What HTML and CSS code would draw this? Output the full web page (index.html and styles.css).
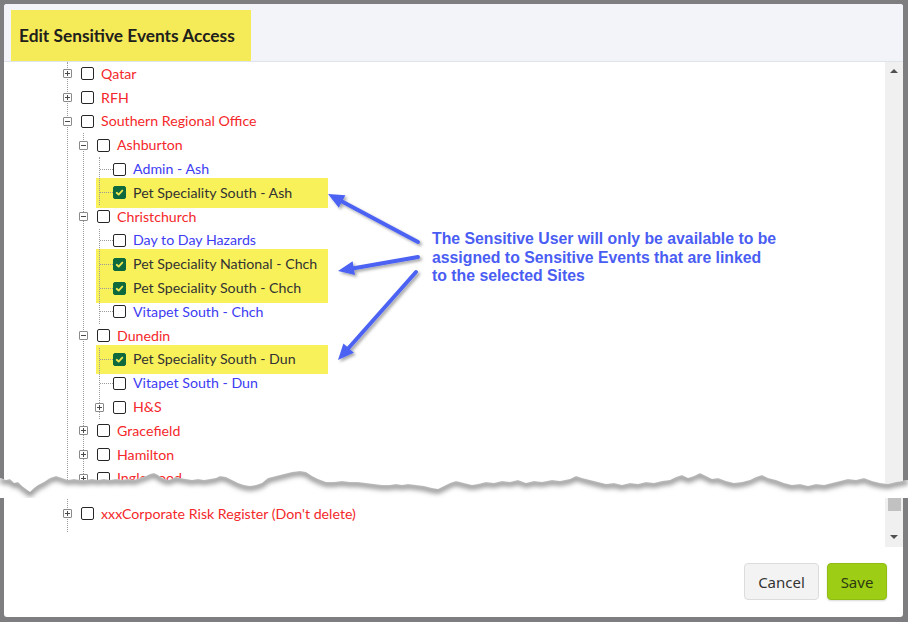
FILE: index.html
```html
<!DOCTYPE html>
<html lang="en">
<head>
<meta charset="utf-8">
<title>Edit Sensitive Events Access</title>
<link rel="stylesheet" href="styles.css">
</head>
<body>
<div class="dialog">
  <header class="dlg-head">
    <h1 class="dlg-title">Edit Sensitive Events Access</h1>
  </header>

  <div class="dlg-body">
    <div class="tree-pane">
      <ul class="branch root">
        <li><div class="row"><span class="exp plus"></span><span class="cb"></span><span class="lbl grp">Qatar</span></div></li>
        <li><div class="row"><span class="exp plus"></span><span class="cb"></span><span class="lbl grp">RFH</span></div></li>
        <li>
          <div class="row"><span class="exp"></span><span class="cb"></span><span class="lbl grp">Southern Regional Office</span></div>
          <ul class="branch">
            <li>
              <div class="row"><span class="exp"></span><span class="cb"></span><span class="lbl grp">Ashburton</span></div>
              <ul class="branch">
                <li><div class="row leaf"><span class="stub"></span><span class="cb"></span><span class="lbl site">Admin - Ash</span></div></li>
                <li><div class="row leaf marked"><span class="stub"></span><span class="cb on"><svg viewBox="0 0 13 13"><path d="M3.2 6.8 5.5 9 9.8 4.2"/></svg></span><span class="lbl picked">Pet Speciality South - Ash</span></div></li>
              </ul>
            </li>
            <li>
              <div class="row"><span class="exp"></span><span class="cb"></span><span class="lbl grp">Christchurch</span></div>
              <ul class="branch">
                <li><div class="row leaf"><span class="stub"></span><span class="cb"></span><span class="lbl site">Day to Day Hazards</span></div></li>
                <li><div class="row leaf marked"><span class="stub"></span><span class="cb on"><svg viewBox="0 0 13 13"><path d="M3.2 6.8 5.5 9 9.8 4.2"/></svg></span><span class="lbl picked">Pet Speciality National - Chch</span></div></li>
                <li><div class="row leaf marked"><span class="stub"></span><span class="cb on"><svg viewBox="0 0 13 13"><path d="M3.2 6.8 5.5 9 9.8 4.2"/></svg></span><span class="lbl picked">Pet Speciality South - Chch</span></div></li>
                <li><div class="row leaf"><span class="stub"></span><span class="cb"></span><span class="lbl site">Vitapet South - Chch</span></div></li>
              </ul>
            </li>
            <li>
              <div class="row"><span class="exp"></span><span class="cb"></span><span class="lbl grp">Dunedin</span></div>
              <ul class="branch">
                <li><div class="row leaf marked"><span class="stub"></span><span class="cb on"><svg viewBox="0 0 13 13"><path d="M3.2 6.8 5.5 9 9.8 4.2"/></svg></span><span class="lbl picked">Pet Speciality South - Dun</span></div></li>
                <li><div class="row leaf"><span class="stub"></span><span class="cb"></span><span class="lbl site">Vitapet South - Dun</span></div></li>
                <li><div class="row"><span class="exp plus"></span><span class="cb"></span><span class="lbl grp">H&amp;S</span></div></li>
              </ul>
            </li>
            <li><div class="row"><span class="exp plus"></span><span class="cb"></span><span class="lbl grp">Gracefield</span></div></li>
            <li><div class="row"><span class="exp plus"></span><span class="cb"></span><span class="lbl grp">Hamilton</span></div></li>
            <li><div class="row"><span class="exp plus"></span><span class="cb"></span><span class="lbl grp">Inglewood</span></div></li>
          </ul>
        </li>
        <li class="after-cut"><div class="row"><span class="exp plus"></span><span class="cb"></span><span class="lbl grp">xxxCorporate Risk Register (Don't delete)</span></div></li>
      </ul>
    </div>

    <div class="scrollbar">
      <span class="sb-up"></span>
      <span class="sb-track"></span>
      <span class="sb-thumb"></span>
      <span class="sb-down"></span>
    </div>
  </div>

  <footer class="dlg-foot">
    <button class="btn btn-cancel" type="button">Cancel</button>
    <button class="btn btn-save" type="button">Save</button>
  </footer>

  <p class="callout">The Sensitive User will only be available to be<br>assigned to Sensitive Events that are linked<br>to the selected Sites</p>
</div>

<!-- pointer arrows for the callout -->
<svg class="overlay" viewBox="0 0 908 622" aria-hidden="true">
  <defs>
    <filter id="arrowShadow" x="-20%" y="-20%" width="140%" height="140%">
      <feDropShadow dx="2" dy="2" stdDeviation="1.4" flood-color="#000" flood-opacity="0.35"/>
    </filter>
  </defs>
  <g class="arrows" filter="url(#arrowShadow)">
    <line x1="418" y1="242" x2="342" y2="201.5"/>
    <polygon points="328,194 345.4,195.3 338.8,207.7"/>
    <line x1="418" y1="257" x2="353.8" y2="268.2"/>
    <polygon points="338,271 355,275.1 352.6,261.3"/>
    <line x1="416" y1="272" x2="348.6" y2="348"/>
    <polygon points="338,360 353.9,352.7 343.4,343.4"/>
  </g>
</svg>

<!-- torn-paper break across the list -->
<svg class="tear" viewBox="0 0 908 40" aria-hidden="true">
  <defs>
    <clipPath id="tearClip">
      <path d="M0 20 L6 22 L10 21 L14 25 L18 24 L22 28 L26 31 L30 34 L34 30 L38 27 L44 24 L50 20 L56 18 L62 20 L68 22 L74 21 L80 22 L86 22 L92 21 L98 22 L104 21 L110 22 L116 21 L122 22 L128 21 L134 22 L140 20 L146 18 L150 16 L154 15 L158 17 L162 20 L168 22 L172 21 L176 19 L180 20 L186 21 L192 22 L198 21 L204 22 L210 21 L216 20 L220 18 L226 19 L232 22 L238 25 L244 27 L250 28 L256 27 L262 25 L268 20 L276 18 L284 16 L292 14 L300 13 L306 14 L312 18 L318 21 L326 24 L334 24 L342 23 L350 24 L358 24 L366 25 L374 26 L382 27 L390 27 L396 26 L402 27 L408 26 L416 27 L424 28 L432 30 L438 31 L444 28 L450 25 L456 23 L464 25 L472 27 L478 26 L486 24 L494 25 L502 23 L510 24 L518 22 L526 25 L534 23 L542 24 L552 22 L560 23 L570 21 L576 18 L582 20 L590 22 L598 24 L606 26 L614 25 L622 27 L630 25 L638 26 L646 24 L654 25 L662 23 L670 22 L676 19 L682 17 L688 20 L694 18 L700 15 L706 18 L712 21 L718 20 L726 23 L734 25 L742 24 L750 22 L756 19 L762 17 L768 20 L776 22 L784 25 L792 27 L800 26 L808 28 L816 26 L824 27 L832 25 L840 23 L848 21 L856 22 L864 20 L872 23 L880 25 L888 26 L896 24 L908 22 L908 40 L0 40 Z"/>
    </clipPath>
    <filter id="tearBlur" x="-5%" y="-100%" width="110%" height="300%">
      <feGaussianBlur stdDeviation="2.4"/>
    </filter>
  </defs>
  <g clip-path="url(#tearClip)">
    <rect class="tear-paper" x="0" y="0" width="908" height="40"/>
    <path class="tear-shadow" filter="url(#tearBlur)" transform="translate(0 2)" d="M0 20 L6 22 L10 21 L14 25 L18 24 L22 28 L26 31 L30 34 L34 30 L38 27 L44 24 L50 20 L56 18 L62 20 L68 22 L74 21 L80 22 L86 22 L92 21 L98 22 L104 21 L110 22 L116 21 L122 22 L128 21 L134 22 L140 20 L146 18 L150 16 L154 15 L158 17 L162 20 L168 22 L172 21 L176 19 L180 20 L186 21 L192 22 L198 21 L204 22 L210 21 L216 20 L220 18 L226 19 L232 22 L238 25 L244 27 L250 28 L256 27 L262 25 L268 20 L276 18 L284 16 L292 14 L300 13 L306 14 L312 18 L318 21 L326 24 L334 24 L342 23 L350 24 L358 24 L366 25 L374 26 L382 27 L390 27 L396 26 L402 27 L408 26 L416 27 L424 28 L432 30 L438 31 L444 28 L450 25 L456 23 L464 25 L472 27 L478 26 L486 24 L494 25 L502 23 L510 24 L518 22 L526 25 L534 23 L542 24 L552 22 L560 23 L570 21 L576 18 L582 20 L590 22 L598 24 L606 26 L614 25 L622 27 L630 25 L638 26 L646 24 L654 25 L662 23 L670 22 L676 19 L682 17 L688 20 L694 18 L700 15 L706 18 L712 21 L718 20 L726 23 L734 25 L742 24 L750 22 L756 19 L762 17 L768 20 L776 22 L784 25 L792 27 L800 26 L808 28 L816 26 L824 27 L832 25 L840 23 L848 21 L856 22 L864 20 L872 23 L880 25 L888 26 L896 24 L908 22"/>
  </g>
</svg>
</body>
</html>
```

FILE: styles.css
```css
* { box-sizing: border-box; }

html, body {
  margin: 0;
  padding: 0;
}

body {
  position: relative;
  width: 908px;
  height: 622px;
  overflow: hidden;
  background: #7e7e80;
  font-family: Lato, "Open Sans", sans-serif;
}

/* ---------- dialog frame ---------- */
.dialog {
  position: relative;
  margin: 4px 0 0 4px;
  width: 899px;
  height: 613px;
  background: #fff;
  border-radius: 3px;
  display: flex;
  flex-direction: column;
  overflow: hidden;
}

.dlg-head {
  height: 58px;
  flex: none;
  background: #f3f4f9;
  border-bottom: 1px solid #dfe3ea;
  padding: 6px 0 0 7px;
}

.dlg-title {
  margin: 0;
  width: 240px;
  height: 51px;
  background: #f5ea57;
  padding: 0 0 0 8px;
  display: flex;
  align-items: center;
  font-size: 17.3px;
  font-weight: 700;
  color: #1e201c;
}

.dlg-body {
  height: 485px;
  flex: none;
  display: flex;
}

/* ---------- tree ---------- */
.tree-pane {
  position: relative;
  z-index: 0;
  flex: 1;
  overflow: hidden;
}

.branch {
  list-style: none;
  margin: 0 0 0 15px;
  padding: 0;
  border-left: 1px dotted #9a9a9a;
}

.branch.root {
  margin-left: 63px;
  padding-bottom: 6px;
}

.row {
  position: relative;
  height: 23.8px;
  display: flex;
  align-items: center;
  white-space: nowrap;
}

/* expand / collapse box */
.exp {
  position: relative;
  flex: none;
  width: 9px;
  height: 9px;
  margin-left: -5px;
  border: 1px solid #8a8a8a;
  border-radius: 1px;
  background: #fff;
}
.exp::before {
  content: "";
  position: absolute;
  left: 1px;
  top: 3px;
  width: 5px;
  height: 1px;
  background: #4a4a4a;
}
.exp.plus::after {
  content: "";
  position: absolute;
  left: 3px;
  top: 1px;
  width: 1px;
  height: 5px;
  background: #4a4a4a;
}

/* dotted connector into a leaf */
.stub {
  flex: none;
  width: 13px;
  height: 0;
  border-top: 1px dotted #9a9a9a;
}

.cb {
  flex: none;
  width: 13px;
  height: 13px;
  margin-left: 9px;
  border: 1.4px solid #262626;
  border-radius: 2px;
  background: #fff;
}
.leaf .cb { margin-left: 0; }

.cb.on {
  background: #0e6a3d;
  border-color: #0e6a3d;
  display: flex;
}
.cb.on svg {
  width: 100%;
  height: 100%;
}
.cb.on path {
  fill: none;
  stroke: #f2e94e;
  stroke-width: 2.1;
  stroke-linecap: round;
  stroke-linejoin: round;
}

.lbl {
  margin-left: 7px;
  font-size: 14.2px;
  line-height: 1;
}
.grp { color: #f4282a; }
.site { color: #3d3cf2; }
.picked { color: #333; }

/* yellow marker behind selected sites */
.marked::before {
  content: "";
  position: absolute;
  z-index: -1;
  left: -4px;
  top: -3px;
  bottom: -3px;
  width: 232px;
  background: #f8f15a;
}

.after-cut { margin-top: 11.6px; }

/* ---------- scrollbar ---------- */
.scrollbar {
  flex: none;
  width: 18px;
  background: #f0f0f0;
  display: flex;
  flex-direction: column;
  align-items: center;
}
.sb-up,
.sb-down {
  width: 0;
  height: 0;
  border-left: 4px solid transparent;
  border-right: 4px solid transparent;
}
.sb-up {
  margin-top: 7px;
  border-bottom: 4px solid #505050;
}
.sb-track { flex: 1; }
.sb-thumb {
  width: 13px;
  height: 16px;
  background: #c1c1c1;
  margin-bottom: 24px;
}
.sb-down {
  margin-bottom: 8px;
  border-top: 4px solid #505050;
}

/* ---------- footer ---------- */
.dlg-foot {
  flex: 1;
  display: flex;
  justify-content: flex-end;
  align-items: flex-start;
  gap: 8px;
  padding: 16px 16px 0 0;
}

.btn {
  height: 37px;
  border-radius: 4px;
  font-family: "Noto Sans", "Open Sans", sans-serif;
  font-size: 15px;
  padding: 0;
  cursor: pointer;
}
.btn-cancel {
  width: 75px;
  background: #f3f3f3;
  border: 1px solid #dcdcdc;
  color: #333;
}
.btn-save {
  width: 60px;
  background: #9dcd14;
  border: 1px solid #8fbd12;
  color: #2c3a12;
  box-shadow: 0 1px 2px rgba(0, 0, 0, 0.15);
}

/* ---------- callout ---------- */
.callout {
  position: absolute;
  left: 428px;
  top: 226px;
  margin: 0;
  white-space: nowrap;
  font-family: "Liberation Sans", Arial, sans-serif;
  font-weight: 700;
  font-size: 15.8px;
  line-height: 18.5px;
  color: #4a5df3;
}

.overlay {
  position: absolute;
  left: 0;
  top: 0;
  width: 908px;
  height: 622px;
  pointer-events: none;
}
.arrows line {
  stroke: #4c62f2;
  stroke-width: 4;
  stroke-linecap: round;
}
.arrows polygon {
  fill: #4c62f2;
}

.tear {
  position: absolute;
  left: 0;
  top: 458px;
  width: 908px;
  height: 40px;
  pointer-events: none;
}
.tear-paper { fill: #fff; }
.tear-shadow {
  fill: none;
  stroke: #8c8c8c;
  stroke-width: 5;
}
```
